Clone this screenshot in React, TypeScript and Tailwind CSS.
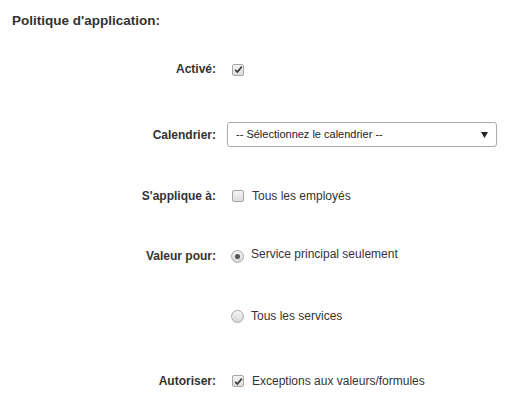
import React from 'react';

function FakeCheckbox({ checked }: { checked?: boolean }) {
  return (
    <span className="inline-flex items-center justify-center w-[12px] h-[12px] rounded-[2px] border border-[#a6a6a6] bg-gradient-to-b from-[#f4f4f4] to-[#dcdcdc] shrink-0">
      {checked && (
        <svg width="9" height="9" viewBox="0 0 9 9">
          <path d="M1.2 4.8 L3.4 7 L7.8 1.6" fill="none" stroke="#3a3a3a" strokeWidth="1.7" />
        </svg>
      )}
    </span>
  );
}

function FakeRadio({ checked }: { checked?: boolean }) {
  return (
    <span className="inline-flex items-center justify-center w-[13px] h-[13px] rounded-full border border-[#a9a9a9] bg-gradient-to-b from-[#f4f4f4] to-[#d8d8d8] shrink-0">
      {checked && <span className="w-[5px] h-[5px] rounded-full bg-[#555]" />}
    </span>
  );
}

function Row({ label, children, className = '' }: { label: string; children: React.ReactNode; className?: string }) {
  return (
    <div className={`flex items-center ${className}`}>
      <div className="w-[216px] text-right font-bold text-[12px] text-[#333]">{label}</div>
      <div className="ml-[11px] flex items-center">{children}</div>
    </div>
  );
}

export default function App() {
  return (
    <div
      className="w-[523px] h-[414px] bg-white text-[#333] overflow-hidden"
      style={{ fontFamily: '"Liberation Sans", Arial, sans-serif' }}
    >
      <div className="pt-[11px] pl-[12px] h-[31px] leading-[20px] font-bold text-[13.5px] text-[#333]">
        Politique d'application:
      </div>

      <Row label="Activé:" className="mt-[26px] h-[24px]">
        <span className="ml-[5px]"><FakeCheckbox checked /></span>
      </Row>

      <Row label="Calendrier:" className="mt-[41px] h-[25px]">
        <div className="w-[270px] h-[25px] border border-[#aaa] rounded-[3px] bg-white flex items-center justify-between pl-[8px] pr-[8px] text-[11px] text-[#222]">
          <span>-- Sélectionnez le calendrier --</span>
          <svg width="7" height="6" viewBox="0 0 7 6"><path d="M0 0 H7 L3.5 6 Z" fill="#222" /></svg>
        </div>
      </Row>

      <Row label="S'applique à:" className="mt-[37px] h-[24px]">
        <span className="ml-[5px] flex items-center gap-[8px]">
          <FakeCheckbox />
          <span className="text-[12px]">Tous les employés</span>
        </span>
      </Row>

      <Row label="Valeur pour:" className="mt-[36px] h-[24px]">
        <span className="ml-[4px] flex items-center gap-[7px]">
          <FakeRadio checked />
          <span className="text-[12px] -mt-[4px]">Service principal seulement</span>
        </span>
      </Row>

      <Row label="" className="mt-[36px] h-[24px]">
        <span className="ml-[4px] flex items-center gap-[7px]">
          <span className="mt-[4px]"><FakeRadio /></span>
          <span className="text-[12px]">Tous les services</span>
        </span>
      </Row>

      <Row label="Autoriser:" className="mt-[41px] h-[24px]">
        <span className="ml-[5px] flex items-center gap-[8px]">
          <FakeCheckbox checked />
          <span className="text-[12px]">Exceptions aux valeurs/formules</span>
        </span>
      </Row>
    </div>
  );
}
